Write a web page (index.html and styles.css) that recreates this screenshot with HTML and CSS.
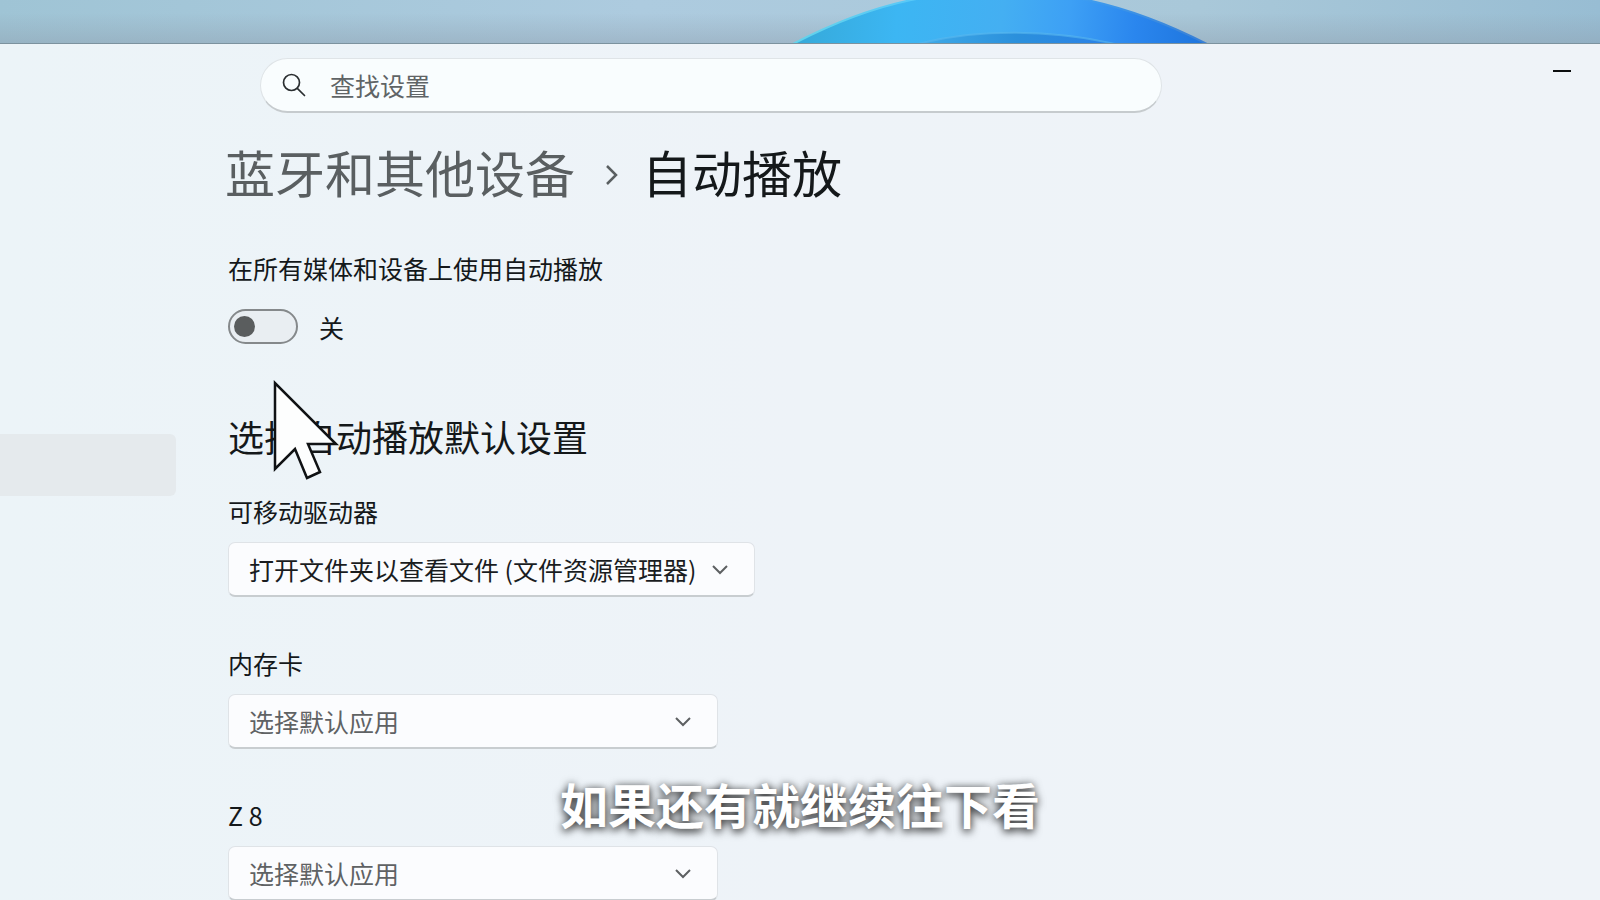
FILE: index.html
```html
<!DOCTYPE html>
<html lang="zh-CN">
<head>
<meta charset="utf-8">
<title>设置</title>
<link rel="stylesheet" href="styles.css">
</head>
<body>
<div class="desktop">
  <svg class="bloom" viewBox="0 0 1600 44" preserveAspectRatio="xMidYMin slice" aria-hidden="true">
    <defs>
      <linearGradient id="petal" x1="792" x2="1208" y1="20" y2="60" gradientUnits="userSpaceOnUse">
        <stop offset="0" stop-color="#35a9d8"/>
        <stop offset=".25" stop-color="#3cb6f3"/>
        <stop offset=".5" stop-color="#44aff2"/>
        <stop offset=".66" stop-color="#3da0f5"/>
        <stop offset=".82" stop-color="#2a86ee"/>
        <stop offset="1" stop-color="#1d73dc"/>
      </linearGradient>
      <linearGradient id="edge" x1="792" x2="1208" y1="0" y2="0" gradientUnits="userSpaceOnUse">
        <stop offset="0" stop-color="#63d3ea"/>
        <stop offset=".3" stop-color="#58c8f8"/>
        <stop offset=".7" stop-color="#3d9df0"/>
        <stop offset="1" stop-color="#3a7fd4"/>
      </linearGradient>
      <linearGradient id="inner" x1="918" x2="1115" y1="0" y2="0" gradientUnits="userSpaceOnUse">
        <stop offset="0" stop-color="#3fabe8"/>
        <stop offset=".5" stop-color="#2b90dc"/>
        <stop offset="1" stop-color="#2a80e8"/>
      </linearGradient>
    </defs>
    <path d="M791 45C829 25 868 9 911 0C970 -11 1030 -11 1087 0C1130 9 1170 25 1209 45Z" fill="url(#petal)" stroke="url(#edge)" stroke-width="2"/>
    <path d="M918 44C975 29 1050 29 1115 44Z" fill="url(#inner)"/>
    <path d="M918 44C975 29 1050 29 1115 44" fill="none" stroke="#58b8ee" stroke-width="2" opacity=".6"/>
  </svg>
</div>

<div class="window">
  <aside class="sidebar">
    <button class="nav-item" type="button" aria-label="蓝牙和其他设备"></button>
  </aside>

  <div class="content">
    <header class="topbar">
      <label class="search">
        <svg class="search-icon" viewBox="0 0 24 24" aria-hidden="true"><circle cx="9.5" cy="9.5" r="8"/><path d="M15.300 15.300L22.500 22.500"/></svg>
        <input class="search-input" type="text" placeholder="查找设置" aria-label="查找设置">
      </label>
      <button class="minimize" type="button" aria-label="最小化"><span class="minimize-bar"></span></button>
    </header>

    <main class="page">
      <h1 class="breadcrumb">
        <a class="crumb-link" href="#">蓝牙和其他设备</a>
        <svg class="crumb-arrow" viewBox="0 0 14 20" aria-hidden="true"><path d="M2 1L11 10L2 19"/></svg>
        <span>自动播放</span>
      </h1>

      <section class="autoplay">
        <label class="label" for="autoplay">在所有媒体和设备上使用自动播放</label>
        <div class="toggle-row">
          <input class="toggle" id="autoplay" type="checkbox" role="switch">
          <span class="label">关</span>
        </div>
      </section>

      <h2 class="section-title">选择自动播放默认设置</h2>

      <div class="fields">
        <div class="field field-wide">
          <label class="label" for="drive">可移动驱动器</label>
          <div class="combo">
            <select class="select select-set" id="drive"><option>打开文件夹以查看文件 (文件资源管理器)</option></select>
            <svg class="chevron" viewBox="0 0 16 10" aria-hidden="true"><path d="M1 1L8 8L15 1"/></svg>
          </div>
        </div>
        <div class="field">
          <label class="label" for="card">内存卡</label>
          <div class="combo">
            <select class="select" id="card"><option>选择默认应用</option></select>
            <svg class="chevron" viewBox="0 0 16 10" aria-hidden="true"><path d="M1 1L8 8L15 1"/></svg>
          </div>
        </div>
        <div class="field">
          <label class="label" for="z8">Z 8</label>
          <div class="combo">
            <select class="select" id="z8"><option>选择默认应用</option></select>
            <svg class="chevron" viewBox="0 0 16 10" aria-hidden="true"><path d="M1 1L8 8L15 1"/></svg>
          </div>
        </div>
      </div>
    </main>
  </div>
</div>

<svg class="cursor" viewBox="0 0 70 104" aria-hidden="true"><path d="M3 4V90L23 70L35 99L48 93L36 65L64 65Z"/></svg>
<p class="subtitle">如果还有就继续往下看</p>
</body>
</html>
```
FILE: styles.css
```css
* {
  box-sizing: border-box;
}

body {
  margin: 0;
  height: 100vh;
  overflow: hidden;
  position: relative;
  display: flex;
  flex-direction: column;
  font-family: "Noto Sans CJK SC", sans-serif;
  font-size: 25px;
  line-height: 34px;
  color: #14181a;
}

h1,
h2,
p {
  margin: 0;
  font-weight: 400;
}

.desktop {
  flex: none;
  height: 44px;
  border-bottom: 1px solid #7c929e;
  background:
    linear-gradient(to bottom, rgba(140, 155, 170, 0) 30%, rgba(140, 155, 170, 0.4)),
    linear-gradient(to right, #9fc4d5, #adcbdf 40%, #a9c8d9 75%, #98bdd3);
}

.bloom {
  display: block;
  width: 100%;
  height: 100%;
}

.window {
  flex: 1;
  min-height: 0;
  display: flex;
  overflow: hidden;
  background: linear-gradient(to right, #ecf4f8, #eef3f8 50%, #eff3f8);
}

.sidebar {
  flex: none;
  width: 176px;
  padding-top: 390px;
}

.nav-item {
  display: block;
  width: 100%;
  height: 62px;
  border: 0;
  border-radius: 0 6px 6px 0;
  background: #e5eaed;
}

.content {
  flex: 1;
  min-width: 0;
}

.topbar {
  display: flex;
  justify-content: space-between;
  align-items: flex-start;
  padding: 14px 15px 0 84px;
}

.search {
  flex: 0 1 902px;
  height: 55px;
  display: flex;
  align-items: center;
  gap: 24px;
  padding: 0 21px;
  border: 1px solid #dfe4e7;
  border-bottom: 2px solid #c6cbce;
  border-radius: 28px;
  background: #f9fdfe;
}

.search-icon {
  flex: none;
  width: 24px;
  height: 24px;
  fill: none;
  stroke: #2a2e30;
  stroke-width: 1.7;
  stroke-linecap: round;
}

.search-input {
  flex: 1;
  min-width: 0;
  padding: 0;
  border: 0;
  outline: 0;
  background: none;
  font: inherit;
  color: #14181a;
}

.search-input::placeholder {
  color: #5f6466;
  opacity: 1;
}

.minimize {
  width: 46px;
  height: 26px;
  padding: 0;
  border: 0;
  background: none;
  display: flex;
  align-items: center;
  justify-content: center;
}

.minimize-bar {
  width: 18px;
  height: 2px;
  background: #0c0e0f;
}

.page {
  padding: 28px 52px 0;
}

.breadcrumb {
  display: flex;
  align-items: center;
  margin-left: -3px;
  font-size: 50px;
  line-height: 60px;
}

.crumb-link {
  color: #5a5f61;
  text-decoration: none;
}

.crumb-arrow {
  width: 14px;
  height: 20px;
  margin: 8px 23px 0 30px;
  fill: none;
  stroke: #5a5f61;
  stroke-width: 2.5;
}

.autoplay {
  margin-top: 50px;
}

.label {
  display: block;
}

.toggle-row {
  display: flex;
  align-items: center;
  gap: 21px;
  margin-top: 24px;
}

.toggle {
  appearance: none;
  width: 70px;
  height: 35px;
  margin: 0;
  padding: 0 4px;
  display: flex;
  align-items: center;
  border: 2px solid #85898b;
  border-radius: 18px;
  background: #e9eef2;
}

.toggle::before {
  content: "";
  width: 21px;
  height: 21px;
  border-radius: 50%;
  background: #5a5d5e;
}

.toggle:checked {
  justify-content: flex-end;
}

.section-title {
  margin-top: 68px;
  font-size: 36px;
  line-height: 48px;
}

.fields {
  display: grid;
  gap: 49px;
  margin-top: 34px;
}

.field {
  display: grid;
  gap: 14px;
  max-width: 490px;
}

.field-wide {
  max-width: 527px;
}

.combo {
  display: grid;
  grid-template-columns: 1fr 28px;
  align-items: center;
}

.select {
  grid-area: 1 / 1 / 2 / 3;
  appearance: none;
  width: 100%;
  height: 55px;
  padding: 0 48px 0 20px;
  border: 1px solid #dfe3e7;
  border-bottom: 2px solid #c8cdd0;
  border-radius: 7px;
  background: #fbfcfe;
  font: inherit;
  color: #5f6264;
}

.select-set {
  color: #1a1d1f;
}

.chevron {
  grid-area: 1 / 2;
  justify-self: end;
  margin-right: 27px;
  width: 16px;
  height: 10px;
  fill: none;
  stroke: #5d6062;
  stroke-width: 2;
  pointer-events: none;
}

.cursor {
  position: absolute;
  left: 272px;
  top: 379px;
  width: 70px;
  height: 104px;
  fill: #fdfefe;
  stroke: #101214;
  stroke-width: 2.5;
  pointer-events: none;
}

.subtitle {
  position: absolute;
  left: 0;
  right: 0;
  bottom: 67px;
  text-align: center;
  font-size: 48px;
  line-height: 60px;
  font-weight: 700;
  color: #fff;
  text-shadow: 0 3px 8px rgba(0, 0, 0, 0.6), 0 1px 8px rgba(0, 0, 0, 0.55);
  pointer-events: none;
}
```
